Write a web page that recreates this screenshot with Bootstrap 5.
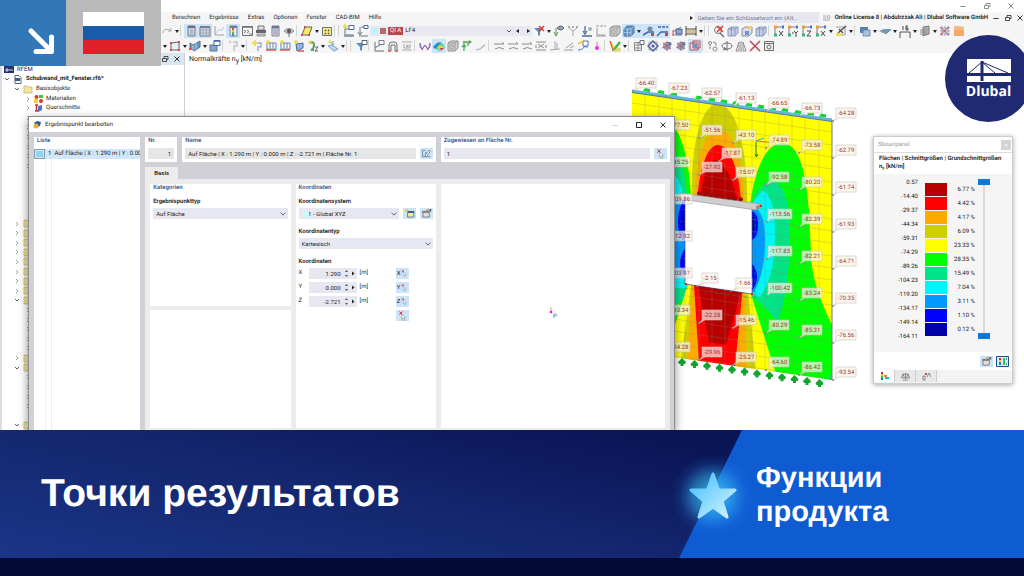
<!DOCTYPE html>
<html lang="ru">
<head>
<meta charset="utf-8">
<meta name="viewport" content="width=device-width, initial-scale=1">
<title>Точки результатов</title>
<link href="https://cdn.jsdelivr.net/npm/bootstrap@5.3.0/dist/css/bootstrap.min.css" rel="stylesheet">
<style>
:root { --field: #e7e7f2; --pick: #cce4f7; --frame: #d0d0d6; --head: #46598c; }
body { font-family: Roboto, "Open Sans", sans-serif; font-size: 6px; line-height: 8px; color: #222; background: #030b34; text-rendering: geometricPrecision; }
svg { display: block; }
button { border: 0; padding: 0; background: none; color: inherit; }
.app { background: #fff; min-height: 430px; }
.form-control, .form-select { font-size: 6px; line-height: 8px; }

/* main window */
.caption { height: 12px; padding-right: 9px; gap: 16px; color: #777; }
.menubar { height: 11px; background: #f5f5f5; padding-left: 163px; gap: 9px; white-space: nowrap; }
.menubar a { color: #222; text-decoration: none; }
.search { width: 124px; height: 8px; border: 0; border-radius: 0; background: #e9e9f2; padding: 0 2px; color: #888; }
.search::placeholder { color: #777b8c; }
.toolrow { height: 15px; background: #f5f5f5; white-space: nowrap; overflow: hidden; }
.toolrow.first { padding-left: 160px; }
.toolrow.second { padding-left: 162px; }
.tool { width: 14px; height: 14px; flex: none; }
.tool svg { opacity: .82; }
.tool.on, .drop.on { background: var(--pick); }
.drop { width: 6px; height: 14px; flex: none; }
.gap-s { width: 4px; height: 11px; flex: none; border-left: 1px solid #d4d4d4; }
.loadcase { width: 162px; height: 10px; background: #e8e8f2; flex: none; gap: 2px; padding-left: 2px; }
.sw { width: 6px; height: 6px; flex: none; }
.lc-badge { background: #b94a4a; color: #fff; font-size: 6px; line-height: 8px; padding: 0 2px; }

/* navigator */
.navi { width: 185px; flex: none; border-left: 2px solid #dcdce6; border-right: 1px solid #d0d0d8; }
.navi-head { height: 12px; background: #d9e7f5; padding-right: 3px; gap: 4px; }
.treelist { flex: 1; list-style: none; margin: 0; padding: 0; }
.treelist li { flex: 1 1 0; min-height: 0; gap: 3px; white-space: nowrap; }
.lv1 { padding-left: 2px; } .lv2 { padding-left: 12px; } .lv3 { padding-left: 23px; }
.canvas-title { padding: 1px 4px; font-size: 7px; line-height: 10px; }
.canvas-title sub { font-size: 7px; }
.plot { position: absolute; right: 154px; top: 70px; width: 250px; height: 325px; }
.plot text { font-size: 6px; fill: #a63434; text-anchor: middle; }

/* dialog */
.dlg { position: absolute; left: 28px; top: 116px; width: 63.2%; bottom: 0; background: var(--frame); border: 1px solid #8b8b90; border-bottom: 0; box-shadow: 0 3px 9px rgba(0,0,0,.45); }
.dlg-title { height: 15px; background: #fff; padding: 0 7px 0 4px; gap: 4px; }
.dlg-grid { display: grid; grid-template-columns: 106fr 524fr; gap: 5px; padding: 5px 4px 0 5px; flex: 1; min-height: 0; }
.dlg-head { display: grid; grid-template-columns: 32fr 253fr 229fr; gap: 5px; }
.dlg-head .mt { margin-top: 3px; }
.dlg-body { display: grid; grid-template-columns: 141fr 141fr 225fr; gap: 5px; background: #ececec; padding: 5px 5px 2px; flex: 1; }
.pane { background: #fff; }
.pad { padding: 0 3px 3px; }
.half { flex: 1 1 0; }
.pane h2, .pane h3 { font-size: 6px; line-height: 8px; margin: 0; font-weight: 600; color: var(--head); }
.pane label { font-size: 6px; line-height: 8px; font-weight: 600; display: block; margin: 0; }
.dlg-head label { color: var(--head); }
.first-label { padding-top: 6px; }
.next-label { padding-top: 9px; }
.pane label.first-label, .pane label.next-label { margin-bottom: 2px; }
.form-control, .form-select { height: 11px; min-height: 0; border: 0; border-radius: 0; padding: 0 3px; background-color: var(--field); color: #222; }
.form-select { background-size: 6px; background-position: right 2px center; padding-right: 10px; }
.form-control.ro { background: #e6e6e6; }
.pickbtn { width: 13px; height: 11px; flex: none; background: var(--pick); display: flex; align-items: center; justify-content: center; }
.item-row { background: #cfe7f8; height: 10px; overflow: hidden; white-space: nowrap; gap: 3px; }
.item-sw { width: 11px; height: 10px; border: 1px solid #8a9aa8; background: #8fd4f2; flex: none; box-shadow: inset 0 0 0 1px #cfe7f8; }
.list-lines { flex: 1; margin-left: 11px; width: 7px; border: solid #f0f0f0; border-width: 0 1px; }
.tabbtn { align-self: flex-start; width: 33px; height: 12px; background: #ececec; margin-top: 5px; font-weight: 600; }
.view3d { padding: 14px 0 0 2px; }
.coord { height: 14px; gap: 3px; }
.coord label { width: 7px; font-weight: 400; }
.coord .form-control { width: 34px; padding: 0 2px; text-align: right; }
.spin { width: 14px; height: 11px; background: var(--field); margin-left: -3px; }

/* control panel */
.cpanel { position: absolute; right: 11px; top: 136px; width: 140px; background: #fff; border: 1px solid #ccc; box-shadow: 0 1px 5px rgba(0,0,0,.35); }
.cp-title { height: 15px; padding: 0 1px 0 4px; color: #999; }
.cp-close { width: 10px; height: 10px; background: #d4d4d4; color: #fff; line-height: 8px; }
.cp-name { padding: 2px 5px 3px; height: 22px; border-top: 1px solid #ddd; white-space: nowrap; font-weight: 600; color: #222; }
.cp-scale { background: #f5f5f5; height: 178px; padding: 4px 22px 0 12px; }
.nums { width: 32px; text-align: right; }
.nums div { height: 14px; line-height: 10px; }
.bars { width: 22px; margin: 5px 0 0 7px; }
.bars div { height: 13px; margin-bottom: 1px; }
.pcts { width: 28px; text-align: right; margin-top: 7px; }
.pcts div { height: 14px; line-height: 10px; }
.slider { position: relative; width: 12px; height: 160px; margin: 1px 0 0 3px; }
.slider::before { content: ""; position: absolute; left: 5px; top: 3px; bottom: 3px; width: 2px; background: #d5dbe2; }
.slider input { position: absolute; left: 0; top: 0; width: 160px; height: 12px; margin: 0; appearance: none; background: none; transform-origin: 0 0; transform: translateX(12px) rotate(90deg); pointer-events: none; }
.slider input::-webkit-slider-thumb { appearance: none; width: 6px; height: 12px; background: #0a78d4; pointer-events: auto; }
.cp-tools { height: 18px; padding: 0 3px; gap: 3px; }
.cp-tabs { background: #f3f3f3; height: 13px; }
.cp-tabs button { width: 21px; height: 12px; border-right: 1px solid #ccc; background: #e8e8e8; display: flex; align-items: center; justify-content: center; }
.cp-tabs button.on { background: #fff; }

/* overlays */
.corner { position: absolute; left: 0; top: 0; }
.corner-blue { width: 66px; height: 66px; background: #3277b7; }
.corner-flag { width: 95px; height: 66px; background: #b9b9b9; }
.brand { position: absolute; right: -8px; top: 35px; width: 87px; height: 87px; border-radius: 50%; background: #202a73; color: #fff; padding-top: 24px; font: 700 14px/20px "Open Sans", "Noto Sans", sans-serif; }

/* banner */
.banner { position: relative; min-height: 128px; background: linear-gradient(12deg, #1b3588 0%, #14276f 40%, #0a1555 75%); color: #fff; font-family: "Liberation Sans", Arial, sans-serif; font-weight: 700; overflow: hidden; }
.banner h1 { font: inherit; font-size: 39px; line-height: 48px; margin: 0; padding-left: 41px; }
.feature { width: 345px; min-height: 128px; background: #0e5bd2; clip-path: polygon(63px 0, 100% 0, 100% 100%, 0 100%); padding: 2px 0 0 77px; font-size: 29px; line-height: 34px; }
.star { position: absolute; right: 246px; top: 1px; }
.foot { height: 18px; background: #030b34; }
</style>
</head>
<body>
<svg width="0" height="0" class="position-absolute" aria-hidden="true">
<defs>
<symbol id="i-redo" viewBox="0 0 14 14"><path d="M3 9c0-4 5-5 8-2M11 4v3H8" fill="none" stroke="#999"/></symbol>
<symbol id="i-tbl1" viewBox="0 0 14 14"><path d="M4 2h7v10H4z" fill="#c9d2dc" stroke="#667"/><path d="M4 2h7v2H4z" fill="#556"/><path d="M6 5h3v6H6z" fill="#aab2bb"/></symbol>
<symbol id="i-tbl2" viewBox="0 0 14 14"><path d="M2 3h10v9H2z" fill="#c9cfd6" stroke="#667"/><path d="M2 2h10v2H2z" fill="#667"/><path d="M2 6h10M2 9h10M5 4v8M8.500 4v8" stroke="#8a8f96" stroke-width=".6"/></symbol>
<symbol id="i-chart" viewBox="0 0 14 14"><path d="M3 2v9h9" fill="none" stroke="#889"/><path d="M4 9l3-4 2 2 3-4" fill="none" stroke="#9ac4dd"/></symbol>
<symbol id="i-legend" viewBox="0 0 14 14"><path d="M4 2h7v10H4z" fill="#eee" stroke="#778"/><path d="M4 2h7v2H4z" fill="#567"/><path d="M6 4h2v2H6z" fill="#e22"/><path d="M6 6h2v2H6z" fill="#ec0"/><path d="M6 8h2v2H6z" fill="#2b2"/><path d="M6 10h2v2H6z" fill="#36d"/></symbol>
<symbol id="i-term" viewBox="0 0 14 14"><path d="M2.500 2.500h10v9h-10z" fill="#f4f4f4" stroke="#555"/><path d="M2 3h11" stroke="#555" stroke-width="1.500"/><path d="M4 6l2 1.500L4 9M7 6l2 1.500L7 9M9 10h3" fill="none" stroke="#444" stroke-width=".8"/></symbol>
<symbol id="i-print" viewBox="0 0 14 14"><path d="M4 2h6v4H4z" fill="#ddd" stroke="#555"/><path d="M2 6h10v3H2z" fill="#445"/><path d="M3 10h8v2H3z" fill="#ccc" stroke="#555" stroke-width=".7"/></symbol>
<symbol id="i-calc" viewBox="0 0 14 14"><path d="M4 2h7v10H4z" fill="#e9edf2" stroke="#667"/><path d="M4 2h7v2.500H4z" fill="#4a5a88"/><path d="M5 6h5M5 8h5M5 10h5" stroke="#5a6690"/></symbol>
<symbol id="i-eye" viewBox="0 0 14 14"><path d="M2 7q5-5 10 0q-5 5-10 0" fill="#bbb" stroke="#777"/><circle cx="7" cy="7" r="2" fill="#333"/><path d="M7 9v4" stroke="#555"/></symbol>
<symbol id="i-poly" viewBox="0 0 14 14"><path d="M5 3h7l-3 8H2z" fill="#f5e94b" stroke="#444"/><path d="M1 10h2v2H1zM8 10h2v2H8zM4 2h2v2H4z" fill="#d22"/></symbol>
<symbol id="i-ybox" viewBox="0 0 14 14"><path d="M2.500 3.500h9v8h-9z" fill="#f2e86a" stroke="#555"/><path d="M5 6h1v1H5zM8 6h1v1H8zM5 9h1v1H5zM8 9h1v1H8z" stroke="#333" stroke-width=".6"/></symbol>
<symbol id="i-axnew" viewBox="0 0 14 14"><path d="M3 3v8h9M3 5h8" fill="none" stroke="#4a5a70"/><path d="M7 1.500h5v4H7z" fill="#fff" stroke="#234a94"/><path d="M3 0v5M1 2.500h5" stroke="#e8d41a" stroke-width="1.500"/><path d="M2 12h10" stroke="#678" stroke-width="1.500"/></symbol>
<symbol id="i-ax" viewBox="0 0 14 14"><path d="M4 3v7M2 8l2 3 2-3M5 3h6M3 12h9" fill="none" stroke="#516276"/><path d="M8 1.500h4v3H8z" fill="#fff" stroke="#234a94"/></symbol>
<symbol id="i-filter" viewBox="0 0 14 14"><path d="M2 4h9L8 8v4l-2-1V8z" fill="#3d75ad"/><path d="M8 1.500h5v4H8z" fill="#fff" stroke="#345"/></symbol>
<symbol id="i-filterx" viewBox="0 0 14 14"><path d="M2 4h9L8 8v4l-2-1V8z" fill="#3d75ad"/><path d="M7 2l5 5M12 2L7 7" stroke="#d11" stroke-width="1.600"/></symbol>
<symbol id="i-pin" viewBox="0 0 14 14"><path d="M4 4v8M2 8l2 4 2-4" fill="none" stroke="#3a8a48"/><path d="M5 4q4-4 7 0q-3 4-7 0" fill="#7f94a8" stroke="#345"/></symbol>
<symbol id="i-tri" viewBox="0 0 14 14"><path d="M3 4l4 3 4-3M7 7v5" fill="none" stroke="#999"/><path d="M2 3h2M6 3h2M10 3h2" stroke="#444"/></symbol>
<symbol id="i-down" viewBox="0 0 14 14"><path d="M5 2v6M3 7l2 3 2-3M2 12h10" fill="none" stroke="#2c4d86" stroke-width="1.300"/><circle cx="10" cy="5" r="2" fill="#8aa"/></symbol>
<symbol id="i-nums" viewBox="0 0 14 14"><path d="M3 4v7h8M2 2h3M6 2h3M10 2h2M2 12h10" fill="none" stroke="#888"/></symbol>
<symbol id="i-cube" viewBox="0 0 14 14"><path d="M2 4l3-2h7v7l-3 3H2z" fill="#ccc" stroke="#777"/><path d="M2 4h7v8M9 4l3-2M4 6h3v4H4z" fill="none" stroke="#888"/></symbol>
<symbol id="i-cubeb" viewBox="0 0 14 14"><path d="M2 5l3-3h7v7l-3 3H2z" fill="#4e86b8" stroke="#355c86"/><path d="M2 5h7v7M9 5l3-3M5.500 5v7M2 8.500h7" fill="none" stroke="#cde" stroke-width=".6"/></symbol>
<symbol id="i-move" viewBox="0 0 14 14"><path d="M1 11l5-3h6" fill="none" stroke="#234a94" stroke-width="1.500"/><circle cx="8" cy="5" r="2.500" fill="#678"/><path d="M9 9h3v3H9z" fill="#c22"/></symbol>
<symbol id="i-move2" viewBox="0 0 14 14"><path d="M1 12l4-4h7M2 3h3M6 3h3M10 3h2" fill="none" stroke="#234a94" stroke-width="1.300"/><path d="M9 9h3v3H9z" fill="#c22"/></symbol>
<symbol id="i-sect" viewBox="0 0 14 14"><path d="M2 11h10M3 8l8-5" stroke="#567"/><path d="M6 5h6v5H6z" fill="#6f9bd0" stroke="#2c3c66"/><path d="M3 6v5" stroke="#c22"/></symbol>
<symbol id="i-dim" viewBox="0 0 14 14"><path d="M2 2v10M12 2v10M2 5h10M2 10h10" fill="none" stroke="#222"/><path d="M3 6h8v3H3z" fill="#c9bd70"/></symbol>
<symbol id="i-findx" viewBox="0 0 14 14"><circle cx="6" cy="6" r="3.500" fill="#fff" stroke="#555"/><path d="M8 9l4 4" stroke="#555" stroke-width="1.500"/><path d="M5 2l6 6M11 2L5 8" stroke="#d11" stroke-width="1.600"/></symbol>
<symbol id="i-view" viewBox="0 0 14 14"><path d="M2 5l3-2h7v6l-3 3H2z" fill="#b9c6e4" stroke="#7486b5"/><path d="M2 5h7v7M9 5l3-2M5.500 3v9" fill="none" stroke="#7486b5"/></symbol>
<symbol id="i-viewy" viewBox="0 0 14 14"><path d="M2 5l3-2h7v6l-3 3H2z" fill="#d5d9e0" stroke="#778"/><path d="M5 7h4v4H5z" fill="#4f82c8"/><path d="M8 2h4v3H8z" fill="#e6c648"/></symbol>
<symbol id="i-vx" viewBox="0 0 14 14"><path d="M3 3h7M3 3v8" stroke="#567" fill="none"/><path d="M2 1.500h3v3H2z" fill="#e78b1d"/><path d="M10 1.500h2v3h-2z" fill="#1565c0"/><path d="M2 9.500h3v3H2z" fill="#18a05a"/><path d="M7 7l4 5M11 7l-4 5" stroke="#222"/></symbol>
<symbol id="i-vy" viewBox="0 0 14 14"><path d="M3 3h7M3 3v8" stroke="#567" fill="none"/><path d="M2 1.500h3v3H2z" fill="#e78b1d"/><path d="M10 1.500h2v3h-2z" fill="#1565c0"/><path d="M2 9.500h3v3H2z" fill="#18a05a"/><path d="M6 9h2M8 7l2 2 2-2M10 9v4" stroke="#222" fill="none"/></symbol>
<symbol id="i-vz" viewBox="0 0 14 14"><path d="M3 3h7M3 3v8" stroke="#567" fill="none"/><path d="M2 1.500h3v3H2z" fill="#e78b1d"/><path d="M10 1.500h2v3h-2z" fill="#1565c0"/><path d="M2 9.500h3v3H2z" fill="#18a05a"/><path d="M7 7h4l-4 5h4" stroke="#222" fill="none"/></symbol>
<symbol id="i-saw" viewBox="0 0 14 14"><path d="M2 3h9v8H3" fill="none" stroke="#888"/><path d="M4 9l8-7M5 5l4 4" stroke="#333" stroke-width="1.500"/><path d="M2 9h5v3H2z" fill="#e8d837"/></symbol>
<symbol id="i-boxes" viewBox="0 0 14 14"><path d="M2 3h8v6H2z" fill="#2f6aa8"/><path d="M5 6h7v6H5z" fill="#9bb5d4" stroke="#48658c" stroke-width=".8"/></symbol>
<symbol id="i-slab" viewBox="0 0 14 14"><path d="M1 7l5-2h7l-5 4z" fill="#4f86b8"/><path d="M1 7l7 2 5-4v1L8 10z" fill="#234a70"/></symbol>
<symbol id="i-m16" viewBox="0 0 14 14"><path d="M2 12V8h10v4M1 13h2M11 13h2" fill="none" stroke="#333"/><path d="M5 2v4M10 2H8v4h2V4H8" fill="none" stroke="#222"/></symbol>
<symbol id="i-wall" viewBox="0 0 14 14"><path d="M5 3l6-1v8l-6 2z" fill="#999" stroke="#666"/><path d="M2 6h6M2 8h6M2 10h6" stroke="#777"/></symbol>
<symbol id="i-mesh" viewBox="0 0 14 14"><path d="M2 4h10M2 7h10M2 10h10M4 2v10M7 2v10M10 2v10" stroke="#6c7fa8" stroke-width=".8"/><path d="M2 3l9 8M11 3l-9 8" stroke="#c42a3a"/></symbol>
<symbol id="i-orange" viewBox="0 0 14 14"><path d="M2 2l10 1v9H2z" fill="#f39a4a"/><path d="M2 2l10 1v3H2z" fill="#f6ad68"/></symbol>
<symbol id="i-rect" viewBox="0 0 14 14"><path d="M3 4l8-1v8H3z" fill="#e5eef5" stroke="#345"/><path d="M2 3h2v2H2zM10 2h2v2h-2zM2 10h2v2H2zM10 10h2v2h-2z" fill="#d22"/></symbol>
<symbol id="i-solid" viewBox="0 0 14 14"><path d="M2 4l3 2 7-4v6l-6 4-4-3z" fill="#4f86b8" stroke="#2d5578"/><path d="M5 6v6M8 4v6" stroke="#bcd" stroke-width=".8"/><path d="M1 9h2v2H1z" fill="#d22"/></symbol>
<symbol id="i-cubew" viewBox="0 0 14 14"><path d="M2 6h7v6H2z" fill="#6496c4" stroke="#355c86"/><path d="M6 1.500h6v5H6z" fill="#fff" stroke="#234a94"/><path d="M6 2h6" stroke="#234a94" stroke-width="1.500"/></symbol>
<symbol id="i-gry" viewBox="0 0 14 14"><path d="M7 3h4v4H8v5" fill="none" stroke="#bbb" stroke-width="1.500"/><path d="M4 1v4M2 3h4" stroke="#ccc"/></symbol>
<symbol id="i-star1" viewBox="0 0 14 14"><path d="M7 4h4v4H8v4" fill="none" stroke="#8aa4c8" stroke-width="1.500"/><path d="M5 1v6M2 4h6" stroke="#e9d419" stroke-width="1.500"/></symbol>
<symbol id="i-sload" viewBox="0 0 14 14"><path d="M3 4h9v6H3zM6 4v5M9 4v5" fill="none" stroke="#4c6da6"/><path d="M2 11h10" stroke="#c33" stroke-width="1.500"/><path d="M4 1v4M2 3h4" stroke="#e9d419" stroke-width="1.500"/></symbol>
<symbol id="i-sload2" viewBox="0 0 14 14"><path d="M4 5l7-1v5l-6 3z" fill="#7ba7d6" stroke="#2c4d86"/><path d="M6 12h6" stroke="#c33" stroke-width="1.500"/><path d="M4 1v4M2 3h4" stroke="#e9d419" stroke-width="1.500"/></symbol>
<symbol id="i-sgreen" viewBox="0 0 14 14"><path d="M4 4q4-2 4 2T5 11h3" fill="none" stroke="#3a8a48" stroke-width="2"/><path d="M9 8h3l-3 4h3" fill="none" stroke="#444"/><path d="M4 1v4M2 3h4" stroke="#e9d419"/></symbol>
<symbol id="i-splane" viewBox="0 0 14 14"><path d="M2 7l4-1 6 4-4 2z" fill="#b8d6f2" stroke="#5b8fc4"/><path d="M7 2v4M4 3l4 3" stroke="#5b8fc4"/><path d="M4 1v4M2 3h4" stroke="#e9d419"/></symbol>
<symbol id="i-graph" viewBox="0 0 14 14"><path d="M3 3v9h9M3 9l8-5" fill="none" stroke="#456"/><path d="M7 1.500h5v4H7z" fill="#fff" stroke="#567"/></symbol>
<symbol id="i-arch" viewBox="0 0 14 14"><path d="M3 12V6q0-3 3-3h2q3 0 3 3v6M5 12V6h4v6" fill="none" stroke="#555"/><path d="M2 12h3M9 12h3" stroke="#c33" stroke-width="1.500"/></symbol>
<symbol id="i-frame" viewBox="0 0 14 14"><path d="M2 3h10M2 11h10M4 5v4h6V5M6 6l3 1-3 1" fill="none" stroke="#999"/></symbol>
<symbol id="i-moment" viewBox="0 0 14 14"><path d="M2 4l2 7 3-5 3 5 2-7" fill="none" stroke="#e05" stroke-width=".8"/><path d="M2 4v4l2 2 3-4 3 4 2-2V4" fill="none" stroke="#36c"/></symbol>
<symbol id="i-rain" viewBox="0 0 14 14"><path d="M1 8q5-8 11-2l1 3-6 3z" fill="#18c7e8"/><path d="M3 7q4-5 8-1l1 3-5 2z" fill="#3fe04a"/><path d="M6 7h6l-1 3-4 1z" fill="#f7d21a"/><path d="M8 9h4l-3 3z" fill="#e12"/><path d="M1 8l4-4 5-1-7 7z" fill="#1446d8" opacity=".7"/></symbol>
<symbol id="i-greens" viewBox="0 0 14 14"><path d="M3 3h8M4 3v9M2 8l2-2 2 2M8 3v4" fill="none" stroke="#2a9a3a" stroke-width="1.300"/><path d="M9 1l3 2-3 2" fill="#2a9a3a"/></symbol>
<symbol id="i-slope" viewBox="0 0 14 14"><path d="M2 11q5 0 9-5" fill="none" stroke="#999"/><path d="M5 10l6-5v2z" fill="#aaa"/></symbol>
<symbol id="i-s1" viewBox="0 0 14 14"><path d="M2 5h10M3 10q4-3 9 0M10 3l2 2" fill="none" stroke="#777"/></symbol>
<symbol id="i-s2" viewBox="0 0 14 14"><path d="M2 3h10M2 11h10M4 5l6 4M10 5L4 9M2 6v3M12 6v3" fill="none" stroke="#777"/></symbol>
<symbol id="i-s3" viewBox="0 0 14 14"><path d="M7 2v8M9 4v6M2 11l10-1" fill="none" stroke="#999"/></symbol>
<symbol id="i-s4" viewBox="0 0 14 14"><path d="M2 11h9M4 9l7-5M8 9l4-2" fill="none" stroke="#888"/></symbol>
<symbol id="i-s5" viewBox="0 0 14 14"><path d="M7 2h5v5H7z" fill="#fff" stroke="#345c9c"/><path d="M2 11q4 0 5-2t5-1" fill="none" stroke="#345c9c"/><path d="M2 5l5-3" stroke="#e9c419" stroke-width="1.500"/></symbol>
<symbol id="i-pt" viewBox="0 0 14 14"><path d="M7 3v7" stroke="#e58"/><circle cx="7" cy="9" r="2" fill="#e0d"/></symbol>
<symbol id="i-rainy" viewBox="0 0 14 14"><path d="M2 2l3 10V8z" fill="#e22" stroke="#e22"/><path d="M3 2l5 8h-3z" fill="#f8df22"/><path d="M5 12L12 3" stroke="#2a2" stroke-width="2.500"/><path d="M5 12h7V9z" fill="#f8df22" stroke="#cc5"/></symbol>
<symbol id="i-list" viewBox="0 0 14 14"><path d="M2.500 3.500h7v8h-7zM2 6h7M2 9h7M6 3v8" fill="none" stroke="#777"/><path d="M8 1.500h4v4H8z" fill="#fff" stroke="#456"/></symbol>
<symbol id="i-diam" viewBox="0 0 14 14"><path d="M3 3h8v8H3z" fill="#dfe5f6" stroke="#99a"/><path d="M7 2l5 5-5 5-5-5z" fill="none" stroke="#2a3f96" stroke-width="1.300"/><circle cx="7" cy="7" r="1.500" fill="#2a3f96"/></symbol>
<symbol id="i-globe" viewBox="0 0 14 14"><circle cx="7" cy="7" r="4" fill="#6a9ac6"/><path d="M2 9l10-4M7 2v10M3 4l8 6" stroke="#b8404a"/><path d="M8 3h3v3H8z" fill="#48658c"/></symbol>
<symbol id="i-redbox" viewBox="0 0 14 14"><path d="M2 4h8v7H2zM5 2h7v7H5z" fill="none" stroke="#c22a35"/><path d="M5 5h4v4H5z" fill="#5a86b8"/></symbol>
<symbol id="i-link" viewBox="0 0 14 14"><circle cx="4" cy="4" r="1.500" fill="none" stroke="#777"/><circle cx="9" cy="10" r="2" fill="none" stroke="#777"/><path d="M7 3l3 1v3M4 6v4" stroke="#777" fill="none"/></symbol>
<symbol id="i-rot" viewBox="0 0 14 14"><ellipse cx="7" cy="7" rx="5" ry="3" fill="none" stroke="#555"/><path d="M7 2v10M4 8l2 2-3 1" stroke="#555" fill="none"/></symbol>
<symbol id="i-mir" viewBox="0 0 14 14"><path d="M5 3v9H2zM9 3v9h3zM7 2v11" fill="none" stroke="#777"/></symbol>
<symbol id="i-del" viewBox="0 0 14 14"><path d="M2 2l10 10M12 2L2 12" stroke="#a8272f" stroke-width="1.500"/></symbol>
<symbol id="i-cam" viewBox="0 0 14 14"><path d="M2.500 2.500h9v9h-9z" fill="#eee" stroke="#555"/><path d="M3 4.500h8" stroke="#555"/><circle cx="7" cy="8" r="2" fill="none" stroke="#555"/></symbol>
<symbol id="i-caret" viewBox="0 0 6 14"><path d="M1 6h4L3 9z" fill="#222"/></symbol>
<symbol id="i-pick" viewBox="0 0 14 14"><path d="M3 2l4 4M7 2L3 6" stroke="#d22" stroke-width="1.200"/><path d="M6 5l5 5H8.500l1 3-1.500.5-1-3-1 1z" fill="#fff" stroke="#888" stroke-width=".8"/></symbol>
<symbol id="i-edit" viewBox="0 0 14 14"><path d="M2 3h4M2 3v8h10M6 11V5" fill="none" stroke="#678"/><path d="M5 10l5-7 2 1-5 7z" fill="#fff" stroke="#678"/></symbol>
<symbol id="i-new" viewBox="0 0 14 14"><path d="M4.500 5.500h8v6h-8z" fill="#f2e8a8" stroke="#567"/><path d="M4 5h9" stroke="#234a94" stroke-width="2"/><path d="M4 1v5M1 3.500h5" stroke="#d8c81a" stroke-width="1.300"/></symbol>
<symbol id="i-hand" viewBox="0 0 14 14"><path d="M2.500 4.500h8v7h-8z" fill="#e9e3d2" stroke="#667"/><path d="M2 5h8" stroke="#667" stroke-width="2"/><path d="M6 7q0-5 3-5l3 1" fill="none" stroke="#b59a70" stroke-width="1.500"/><path d="M11 1.500h2v3h-2z" fill="#456"/></symbol>
<symbol id="i-folder" viewBox="0 0 10 9"><path d="M1 1h3l1 1h4v6H1z" fill="#f0e6a4" stroke="#bfae5e" stroke-width=".7"/></symbol>
<symbol id="i-right" viewBox="0 0 6 8"><path d="M2 2l2 2-2 2" fill="none" stroke="#888" stroke-width=".8"/></symbol>
<symbol id="i-open" viewBox="0 0 6 8"><path d="M1 3l2 2 2-2" fill="none" stroke="#333" stroke-width=".8"/></symbol>
<symbol id="i-restore" viewBox="0 0 8 8"><path d="M1.500 3.500h4v3h-4zM3 3V1.500h4v3H6" fill="none" stroke="currentColor" stroke-width=".8"/></symbol>
<symbol id="i-x" viewBox="0 0 8 8"><path d="M1.500 1.500l5 5M6.500 1.500l-5 5" stroke="currentColor" stroke-width=".9"/></symbol>
<symbol id="i-min" viewBox="0 0 8 8"><path d="M1.500 4.500h5" stroke="currentColor" stroke-width=".9"/></symbol>
<symbol id="i-max" viewBox="0 0 8 8"><path d="M1.500 1.500h5v5h-5z" fill="none" stroke="currentColor"/></symbol>
<symbol id="i-next" viewBox="0 0 8 8"><path d="M3 2l3 2-3 2z" fill="#222"/></symbol>
<symbol id="i-prev" viewBox="0 0 8 8"><path d="M5 2L2 4l3 2z" fill="#222"/></symbol>
<symbol id="i-spin" viewBox="0 0 14 11"><path d="M2 4l1.500-2L5 4zM2 7l1.500 2L5 7z" fill="#555"/><path d="M9 3.500l2.500 2L9 7.500z" fill="#222"/></symbol>
</defs>
</svg>

<div class="d-flex flex-column min-vh-100 position-relative overflow-hidden">
<main class="app flex-grow-1 d-flex flex-column position-relative overflow-hidden">
  <header>
    <div class="caption d-flex justify-content-end align-items-center">
      <button aria-label="Minimieren"><svg width="8" height="8"><use href="#i-min"/></svg></button>
      <button aria-label="Wiederherstellen"><svg width="8" height="8"><use href="#i-restore"/></svg></button>
      <button aria-label="Schließen"><svg width="8" height="8"><use href="#i-x"/></svg></button>
    </div>
    <nav class="menubar d-flex align-items-center">
      <span></span><a href="#">Berechnen</a><a href="#">Ergebnisse</a><a href="#">Extras</a><a href="#">Optionen</a><a href="#">Fenster</a><a href="#">CAD-BIM</a><a href="#">Hilfe</a>
      <div class="ms-auto d-flex align-items-center">
        <svg width="8" height="8"><use href="#i-next"/></svg>
        <input class="search form-control" type="search" aria-label="Suche" placeholder="Geben Sie ein Schlüsselwort ein (Alt...">
        <svg class="mx-1" width="8" height="8" viewBox="0 0 8 8"><path d="M0 2h3M0 4h3M0 6h7" stroke="#999" stroke-width=".8"/><circle cx="5.500" cy="3" r="1.500" fill="none" stroke="#999" stroke-width=".8"/></svg>
        <span class="fw-semibold">Online License 8 | Abdulrzzak Ali | Dlubal Software GmbH</span>
        <svg class="ms-1" width="8" height="8"><use href="#i-min"/></svg>
        <svg class="mx-1" width="8" height="8"><use href="#i-restore"/></svg>
        <svg width="8" height="8"><use href="#i-x"/></svg>
      </div>
    </nav>
    <div class="toolrow first d-flex align-items-center" data-tools="redo v s *tbl1 *tbl2 chart *legend term print calc eye s poly v ybox s s axnew ax"></div>
    <div class="toolrow second d-flex align-items-center" data-tools="v rect v solid v cubew s gry v s star1 sload sload sload2 sgreen v splane v s s filter s graph arch frame s moment *rain cube greens slope s s1 s1 s1 s2 s3 s4 s5 pt s rainy v s list diam globe globe *redbox s link rot mir del cam"></div>
  </header>

  <div class="d-flex flex-grow-1">
    <aside class="navi d-flex flex-column">
      <div class="navi-head d-flex align-items-center justify-content-end">
        <svg width="8" height="8"><use href="#i-restore"/></svg><svg width="8" height="8"><use href="#i-x"/></svg>
      </div>
      <ul class="treelist d-flex flex-column" id="tree">
        <li class="lv1 d-flex align-items-center"><svg width="10" height="7" viewBox="0 0 10 7"><path d="M0 0h10v7H0z" fill="#26346e"/><path d="M1 4h8M3 2v4" stroke="#fff" stroke-width=".8"/></svg>RFEM</li>
        <li class="lv1 d-flex align-items-center fw-bold"><svg width="6" height="8"><use href="#i-open"/></svg><svg width="10" height="9" viewBox="0 0 8 9"><path d="M1 .5h4l2 2v6H1z" fill="#fff" stroke="#567"/><path d="M1 3h5v3H1z" fill="#345c8c"/></svg>Schubwand_mit_Fenster.rf6*</li>
        <li class="lv2 d-flex align-items-center"><svg width="6" height="8"><use href="#i-open"/></svg><svg width="10" height="9"><use href="#i-folder"/></svg>Basisobjekte</li>
        <li class="lv3 d-flex align-items-center"><svg width="6" height="8"><use href="#i-right"/></svg><svg width="9" height="8" viewBox="0 0 9 8"><circle cx="2.500" cy="2" r="2" fill="#e5382b"/><path d="M5 0h4v3H5z" fill="#3fbf3f"/><path d="M0 4h4v4H0z" fill="#f0d52c"/><circle cx="7" cy="6" r="2" fill="#d33"/></svg>Materialien</li>
        <li class="lv3 d-flex align-items-center"><svg width="6" height="8"><use href="#i-right"/></svg><svg width="9" height="8" viewBox="0 0 9 8"><path d="M1 1h3M1 7h3M2.500 1v6" stroke="#c33" stroke-width="1.500"/><path d="M4 2l4-1v5L4 8z" fill="#4d78c8"/></svg>Querschnitte</li>
      </ul>
    </aside>
    <section class="flex-grow-1">
      <div class="canvas-title">Normalkräfte n<sub>y</sub> [kN/m]</div>
    </section>
  </div>

  <svg class="plot" viewBox="620 70 250 325" role="img" aria-label="Normalkräfte der Wand">
    <defs><clipPath id="wallclip"><path d="M632 91L832 120V380L632 351ZM685 196V284L752 294V203Z" clip-rule="evenodd"/></clipPath></defs>
    <g clip-path="url(#wallclip)">
      <path d="M632 91L832 120V380L632 351Z" fill="#ff0"/>
      <!-- left flank -->
      <path d="M660 120Q686 120 691 196V290L675 325H632V120Z" fill="#0f0"/>
      <path d="M660 140Q684 150 687 196V296L675 306H660Z" fill="#00e487"/>
      <path d="M660 165Q680 172 683 196H687V288H660Z" fill="#00f6f6"/>
      <path d="M660 200H687V278H660Z" fill="#09f"/>
      <path d="M687 196Q678 205 678 222T687 244ZM687 246Q680 254 680 264T687 276Z" fill="#00f"/>
      <path d="M687 204Q682 212 682 222T687 238Z" fill="#0000a8"/>
      <path d="M688 284L675 325V380H700V284Z" fill="#ff0"/>
      <path d="M691 285L681 360H700V284Z" fill="#cfcf00"/>
      <path d="M692 285L687 362H702V284Z" fill="#fa0"/>
      <!-- plume above the opening -->
      <path d="M692 200C690 140 703 104 717 104C737 104 748 150 747 206Z" fill="#cfcf00"/>
      <path d="M694 200C696 160 704 130 719 130C736 130 744 170 744 206Z" fill="#fa0"/>
      <path d="M697 200C700 165 708 145 718 145C732 145 741 180 741 206Z" fill="red"/>
      <path d="M700 200C702 176 710 160 715 160C726 164 736 184 737 206Z" fill="#b80000"/>
      <!-- right flank -->
      <path d="M750 206C755 165 768 143 782 143C800 143 806 175 809 210L811 255Q812 285 832 325V390H775L750 300Z" fill="#0f0"/>
      <path d="M751 205C757 190 764 181 772 181C785 183 789 205 789 220V262Q787 295 778 322Q768 310 752 296Z" fill="#00e487"/>
      <path d="M752 204Q760 191 764 191C772 196 775 215 775 230Q776 275 760 297L752 294Z" fill="#00f6f6"/>
      <path d="M752 208Q765 208 765 240T754 292H752Z" fill="#09f"/>
      <path d="M752 211Q758 213 758 225T752 240ZM752 264Q757 269 757 277T752 290Z" fill="#00f"/>
      <path d="M752 215Q755 217 755 225T752 234Z" fill="#0000a8"/>
      <path d="M828 380L832 372V380Z" fill="#00e487"/>
      <!-- plume below the opening -->
      <path d="M742 291H750L776 374H740Z" fill="#ff0"/>
      <path d="M740 291H748L756 372H736Z" fill="#cfcf00"/>
      <path d="M738 290H745L747 370H734Z" fill="#fa0"/>
      <path d="M694 285H743L735 368L699 362Z" fill="red"/>
      <path d="M698 286L741 292L726 345L709 342Z" fill="#b80000"/>
      <g id="mesh" stroke="#89897c" stroke-width=".4" opacity=".7"></g>
    </g>
    <path d="M632 91L832 120" stroke="#5fb7df" stroke-width="3"/><path d="M632 92.500L832 121.500" stroke="#58799a" stroke-width="1"/>
    <path d="M832 120V380" stroke="#777"/>
    <path d="M685 196V284L752 294V206" fill="none" stroke="#2a3b8c" stroke-width=".6"/>
    <path d="M685 288L752 298M755 206V300" stroke="#286" stroke-width=".6" stroke-dasharray="3 1 1 1" fill="none"/>
    <path d="M680 193L761 204V207L756 210L680 199Z" fill="#cfcfcf" stroke="#8e8e8e" stroke-width=".6"/><path d="M756 206l5-2v3l-5 3z" fill="#a88"/><circle cx="761" cy="206" r="1" fill="red"/>
    <circle cx="686" cy="284" r="1" fill="red"/><circle cx="752" cy="294" r="1" fill="red"/>
    <path d="M756 142v14M755 154l1.500 3 1.500-3" stroke="#157a15" fill="none"/><path d="M756 141l8-3" stroke="#17b6d6"/><path d="M756 141l20 2" stroke="#c33" stroke-width=".7"/>
    <g id="marks"></g><g id="labels"></g>
  </svg>

  <section class="cpanel" aria-label="Steuerpanel">
    <div class="cp-title d-flex align-items-center justify-content-between">Steuerpanel<button class="cp-close" aria-label="Schließen">×</button></div>
    <div class="cp-name">Flächen | Schnittgrößen | Grundschnittgrößen<br>n<sub>y</sub> [kN/m]</div>
    <div class="cp-scale d-flex">
      <div class="nums"><div>0.57</div><div>-14.40</div><div>-29.37</div><div>-44.34</div><div>-59.31</div><div>-74.29</div><div>-89.26</div><div>-104.23</div><div>-119.20</div><div>-134.17</div><div>-149.14</div><div>-164.11</div></div>
      <div class="bars" id="bars"></div>
      <div class="pcts"><div>6.77 %</div><div>4.42 %</div><div>4.17 %</div><div>6.09 %</div><div>23.33 %</div><div>28.35 %</div><div>15.49 %</div><div>7.04 %</div><div>3.11 %</div><div>1.10 %</div><div>0.12 %</div></div>
      <div class="slider"><input type="range" value="0" aria-label="Obere Grenze"><input type="range" value="100" aria-label="Untere Grenze"></div>
    </div>
    <div class="cp-tools d-flex align-items-center justify-content-end">
      <button class="pickbtn" aria-label="Optionen"><svg width="11" height="11"><use href="#i-hand"/></svg></button>
      <button class="pickbtn" aria-label="Farbskala"><svg width="13" height="11" viewBox="0 0 13 11"><path d="M.5.500h12v10H.5z" fill="#dceefb" stroke="#1b4f8c"/><path d="M3 2h2v2H3z" fill="#e22"/><path d="M3 4h2v2H3z" fill="#fc0"/><path d="M3 6h2v3H3z" fill="#18c"/><path d="M7 2h2v7H7z" fill="#2c6"/><path d="M10 3h1M10 8h1" stroke="#222"/></svg></button>
    </div>
    <div class="cp-tabs d-flex">
      <button class="on" aria-label="Farben"><svg width="9" height="8" viewBox="0 0 9 8"><path d="M1 0h2v2H1z" fill="#e22"/><path d="M1 2h2v2H1z" fill="#fb0"/><path d="M1 4h2v2H1z" fill="#2c4"/><path d="M1 6h2v2H1z" fill="#16d"/><path d="M4 3h3v2H4z" fill="#e82"/><path d="M5 5h4v2H5z" fill="#2bb"/></svg></button>
      <button aria-label="Faktoren"><svg width="9" height="9" viewBox="0 0 9 9"><path d="M4.500 1v6M2 2h5M2 2L.5 6h3zM7 2L5.500 6h3zM2 8h5" fill="none" stroke="#555" stroke-width=".6"/></svg></button>
      <button aria-label="Filter"><svg width="9" height="9" viewBox="0 0 9 9"><path d="M1 4h2v4H1zM5 5l2-4 2 4" fill="none" stroke="#777" stroke-width=".8"/><path d="M3 1h2v2H3z" fill="#c44"/></svg></button>
    </div>
  </section>

  <section class="dlg d-flex flex-column" role="dialog" aria-label="Ergebnispunkt bearbeiten">
    <div class="dlg-title d-flex align-items-center">
      <svg width="8" height="9" viewBox="0 0 8 9"><path d="M1 3l3-2 4 1-1 4-3 1z" fill="#34588c"/><circle cx="3" cy="6" r="2.500" fill="#d9b43c"/></svg>
      <span>Ergebnispunkt bearbeiten</span>
      <span class="ms-auto d-flex gap-3"><svg width="8" height="8" color="#ccc"><use href="#i-min"/></svg><svg width="8" height="8"><use href="#i-max"/></svg><svg width="8" height="8"><use href="#i-x"/></svg></span>
    </div>
    <div class="dlg-grid">
      <div class="pane d-flex flex-column overflow-hidden">
        <h2 class="pad pb-0">Liste</h2>
        <div class="item-row d-flex align-items-center mt-1"><span class="item-sw"></span><span>1</span><span>Auf Fläche | X : 1.290 m | Y : 0.00</span></div>
        <div class="list-lines"></div>
      </div>
      <div class="d-flex flex-column">
        <div class="dlg-head">
          <div class="pane pad"><label for="f-nr">Nr.</label><input id="f-nr" class="form-control ro mt text-end" readonly value="1"></div>
          <div class="pane pad"><label for="f-name">Name</label>
            <div class="d-flex gap-1 mt"><input id="f-name" class="form-control ro" readonly value="Auf Fläche | X : 1.290 m | Y : 0.000 m | Z : -2.721 m | Fläche Nr. 1"><button class="pickbtn" aria-label="Bearbeiten"><svg width="11" height="11"><use href="#i-edit"/></svg></button></div></div>
          <div class="pane pad"><label for="f-srf">Zugewiesen an Fläche Nr.</label>
            <div class="d-flex gap-1 mt"><input id="f-srf" class="form-control" value="1"><button class="pickbtn" aria-label="Wählen"><svg width="11" height="11"><use href="#i-pick"/></svg></button></div></div>
        </div>
        <button class="tabbtn">Basis</button>
        <div class="dlg-body">
          <div class="d-flex flex-column gap-1">
            <div class="pane pad half">
              <h3>Kategorien</h3>
              <label class="first-label" for="f-type">Ergebnispunkttyp</label>
              <select id="f-type" class="form-select"><option>Auf Fläche</option></select>
            </div>
            <div class="pane half"></div>
          </div>
          <div class="pane pad">
            <h3>Koordinaten</h3>
            <label class="first-label" for="f-sys">Koordinatensystem</label>
            <div class="d-flex gap-1"><span class="position-relative flex-fill"><select id="f-sys" class="form-select ps-2"><option>&nbsp;1 - Global XYZ</option></select><span class="sw position-absolute top-50 start-0 translate-middle-y ms-1" style="background:#ccf7fb"></span></span>
              <button class="pickbtn" aria-label="Neu"><svg width="11" height="11"><use href="#i-new"/></svg></button><button class="pickbtn" aria-label="Bearbeiten"><svg width="11" height="11"><use href="#i-hand"/></svg></button></div>
            <label class="next-label" for="f-ctyp">Koordinatentyp</label>
            <select id="f-ctyp" class="form-select"><option>Kartesisch</option></select>
            <h3 class="next-label text-dark">Koordinaten</h3>
            <div id="coords"></div>
          </div>
          <div class="pane view3d d-flex justify-content-center align-items-center">
            <svg width="12" height="14" viewBox="0 0 12 14"><path d="M3 1v5" stroke="#e8a080"/><circle cx="3" cy="6" r="1.300" fill="#f0f"/><text x="5" y="12" font-size="6" fill="#555">P</text></svg>
          </div>
        </div>
      </div>
    </div>
  </section>

  <div class="corner d-flex">
    <div class="corner-blue"><svg width="66" height="66" viewBox="0 0 66 66"><path d="M31 31L51 51M36 51.500H51.500V37" fill="none" stroke="#fff" stroke-width="5" stroke-linecap="round" stroke-linejoin="round"/></svg></div>
    <div class="corner-flag"><svg width="95" height="66" viewBox="0 0 95 66"><path d="M17 12h61v14H17z" fill="#fff"/><path d="M17 26h61v14H17z" fill="#1a5bab"/><path d="M17 40h61v14H17z" fill="#e02028"/></svg></div>
  </div>
  <div class="brand text-center">
    <svg class="mx-auto" width="44" height="23" viewBox="0 0 44 23"><path d="M0 0h44v23H0z" fill="#fff"/><path d="M0 14h44v3H0z" fill="#202a73"/><path d="M13.500 2h3v20h-3z" fill="#202a73"/><path d="M15 3L2 14M15 3l13 11M15 3l26 11" stroke="#202a73" fill="none"/></svg>
    Dlubal
  </div>
</main>

<section class="banner d-flex align-items-center justify-content-between">
  <h1>Точки результатов</h1>
  <div class="feature d-flex align-items-center"><div>Функции<br>продукта</div></div>
  <svg class="star" width="130" height="127" viewBox="-65 -65 130 127" aria-hidden="true">
    <defs><radialGradient id="glow"><stop offset="0" stop-color="#3ccfff" stop-opacity=".9"/><stop offset=".5" stop-color="#35b4f0" stop-opacity=".5"/><stop offset=".8" stop-color="#2a90ee" stop-opacity=".12"/><stop offset="1" stop-color="#2a90ee" stop-opacity="0"/></radialGradient>
    <linearGradient id="sg" x1="0" y1="0" x2="1" y2="1"><stop offset=".2" stop-color="#5cc9ff"/><stop offset="1" stop-color="#d8f4ff"/></linearGradient></defs>
    <circle r="42" fill="url(#glow)"/>
    <path d="M0-22L5.500-6H22L9 5L14 21L0 11L-14 21L-9 5L-22-6H-5.500Z" fill="url(#sg)" stroke="url(#sg)" stroke-width="3" stroke-linejoin="round"/>
  </svg>
</section>
<footer class="foot"></footer>
</div>

<script src="https://cdn.jsdelivr.net/npm/bootstrap@5.3.0/dist/js/bootstrap.bundle.min.js"></script>
<script>
const icon = (n, w, h) => `<svg width="${w}" height="${h}"><use href="#i-${n}"/></svg>`;
const tools = list => list.split(' ').map(t => {
  if (t === 's') return '<span class="gap-s"></span>';
  const on = t[0] === '*' ? ' on' : '', n = t.replace('*', '');
  if (n === 'v') return `<button class="drop${on}" aria-label="Mehr">${icon('caret', 6, 14)}</button>`;
  return `<button class="tool${on}" aria-label="${n}">${icon(n, 14, 14)}</button>`;
}).join('');
document.querySelectorAll('[data-tools]').forEach(r => r.innerHTML = tools(r.dataset.tools));
document.querySelector('.toolrow.first').insertAdjacentHTML('beforeend',
  `<div class="loadcase d-flex align-items-center"><span class="sw" style="background:#b8f4fa"></span><span class="sw" style="background:#b86a66"></span><span class="lc-badge">QI A</span><span>LF4</span><span class="ms-auto">${icon('open', 6, 8)}</span>${icon('prev', 8, 8)}${icon('next', 8, 8)}</div>` +
  tools('filterx v pin tri down nums cube *cubeb *v *move *move2 sect dim v s s findx view viewy view s vx vy vz vx v saw v s boxes v slab v m16 v wall v mesh orange'));

/* navigator rows below the visible ones: c = closed folder, o = open folder, i = inner item, - = covered */
document.getElementById('tree').insertAdjacentHTML('beforeend', [...'iiiiii-----cccccccc' + 'oiiiiicoiiii' + 'ao'].map(k =>
  k === 'i' ? `<li class="lv3 d-flex align-items-center">${icon('right', 6, 8)}</li>` :
  k === '-' || k === 'a' ? '<li></li>' :
  `<li class="lv2 d-flex align-items-center">${icon(k === 'c' ? 'right' : 'open', 6, 8)}${icon('folder', 10, 9)}</li>`).join(''));

document.getElementById('bars').innerHTML = ['#b80000', 'red', '#fa0', '#cfcf00', '#ff0', '#0f0', '#00e487', '#00f6f6', '#09f', '#00f', '#0000a8']
  .map(c => `<div style="background:${c}"></div>`).join('');

document.getElementById('coords').innerHTML = [['X', '1.290'], ['Y', '0.000'], ['Z', '-2.721']].map(([a, v]) =>
  `<div class="coord d-flex align-items-center"><label for="c-${a}">${a}</label><input id="c-${a}" class="form-control" value="${v}"><button class="spin" aria-label="Wert ändern">${icon('spin', 14, 11)}</button><span>[m]</span><button class="pickbtn ms-auto me-4" aria-label="${a} wählen"><span>${a}</span>${icon('pick', 8, 10)}</button></div>`).join('') +
  `<div class="coord d-flex align-items-center"><button class="pickbtn ms-auto me-4" aria-label="Punkt wählen">${icon('pick', 11, 11)}</button></div>`;

/* result plot: mesh, supports, value flags */
let m = '';
for (let i = 1; i < 15; i++) { const x = Math.round(632 + i * 200 / 15); m += `<path d="M${x} 85V390"/>`; }
for (let i = 1; i < 22; i++) { const y = Math.round(91 + i * 37 / 3); m += `<path d="M632 ${y}L832 ${y + 29}"/>`; }
document.getElementById('mesh').innerHTML = m;
let k = '';
for (let i = 0; i < 12; i++) { const x = 682 + i * 12.5, y = 358 + i * 1.9; k += `<path d="M${x} ${y}l4 4-1 2h-1.500v2h-3v-2h-1.500l-1-2z" fill="#12a52e"/>`; }
[646, 660, 673, 698, 711, 723, 735, 748, 760, 772, 784, 797, 810, 822].forEach(x => { const y = 89 + (x - 632) * .145; k += `<path d="M${x - 3} ${y}l2-3 5 1v3z" fill="#12d52e"/>`; });
for (let x = 699; x < 745; x += 6) k += `<circle cx="${x}" cy="${193 + (x - 697) * .14}" r="2" fill="#901010"/>`;
document.getElementById('marks').innerHTML = k;
const flags = [[646,83,'-66.40'],[679,88,'-67.23'],[712,93,'-62.57'],[746,98,'-61.13'],[779,103,'-66.65'],[812,108,'-66.73'],[846,113,'-64.28'],
[680,125,'-77.50'],[712,130,'-51.56'],[746,135,'-43.10'],[779,140,'-74.89'],[812,145,'-73.58'],[846,150,'-62.79'],
[680,162,'-85.25'],[732,153,'-17.87'],[712,167,'-27.92'],[746,172,'-15.07'],[779,177,'-92.58'],[812,182,'-80.20'],[846,187,'-61.74'],
[680,199,'-109.86'],[780,214,'-113.56'],[812,219,'-82.39'],[846,224,'-61.93'],[680,236,'-112.92'],[780,251,'-117.83'],[812,256,'-82.21'],[846,261,'-64.71'],
[680,273,'-103.97'],[710,278,'-2.15'],[744,283,'-1.66'],[780,288,'-100.42'],[812,293,'-83.24'],[846,298,'-70.35'],
[680,310,'-93.34'],[712,315,'-22.28'],[746,320,'-15.46'],[779,325,'-80.29'],[812,330,'-85.31'],[846,335,'-76.56'],
[680,347,'-84.28'],[712,352,'-29.96'],[746,357,'-25.27'],[779,362,'-64.60'],[812,367,'-86.42'],[846,372,'-93.54']];
document.getElementById('labels').innerHTML = flags.map(([x, y, t]) => {
  const w = t.length > 6 ? 24 : t.length < 6 ? 16 : 20, l = x - w / 2, inside = x < 835 && y > 91 + (x - 632) * .145;
  return `<path d="M${x - 13} ${y + 8}L${l} ${y + 5}V${y - 5}h${w}v10H${l + 3}z" fill="#fbf7ee" fill-opacity="${inside ? .7 : 1}" stroke="#c9c5b8" stroke-width=".6"/><circle cx="${x - 13}" cy="${y + 8}" r="1" fill="#888"/><text x="${x}" y="${y + 2}">${t}</text>`;
}).join('');
</script>
</body>
</html>
